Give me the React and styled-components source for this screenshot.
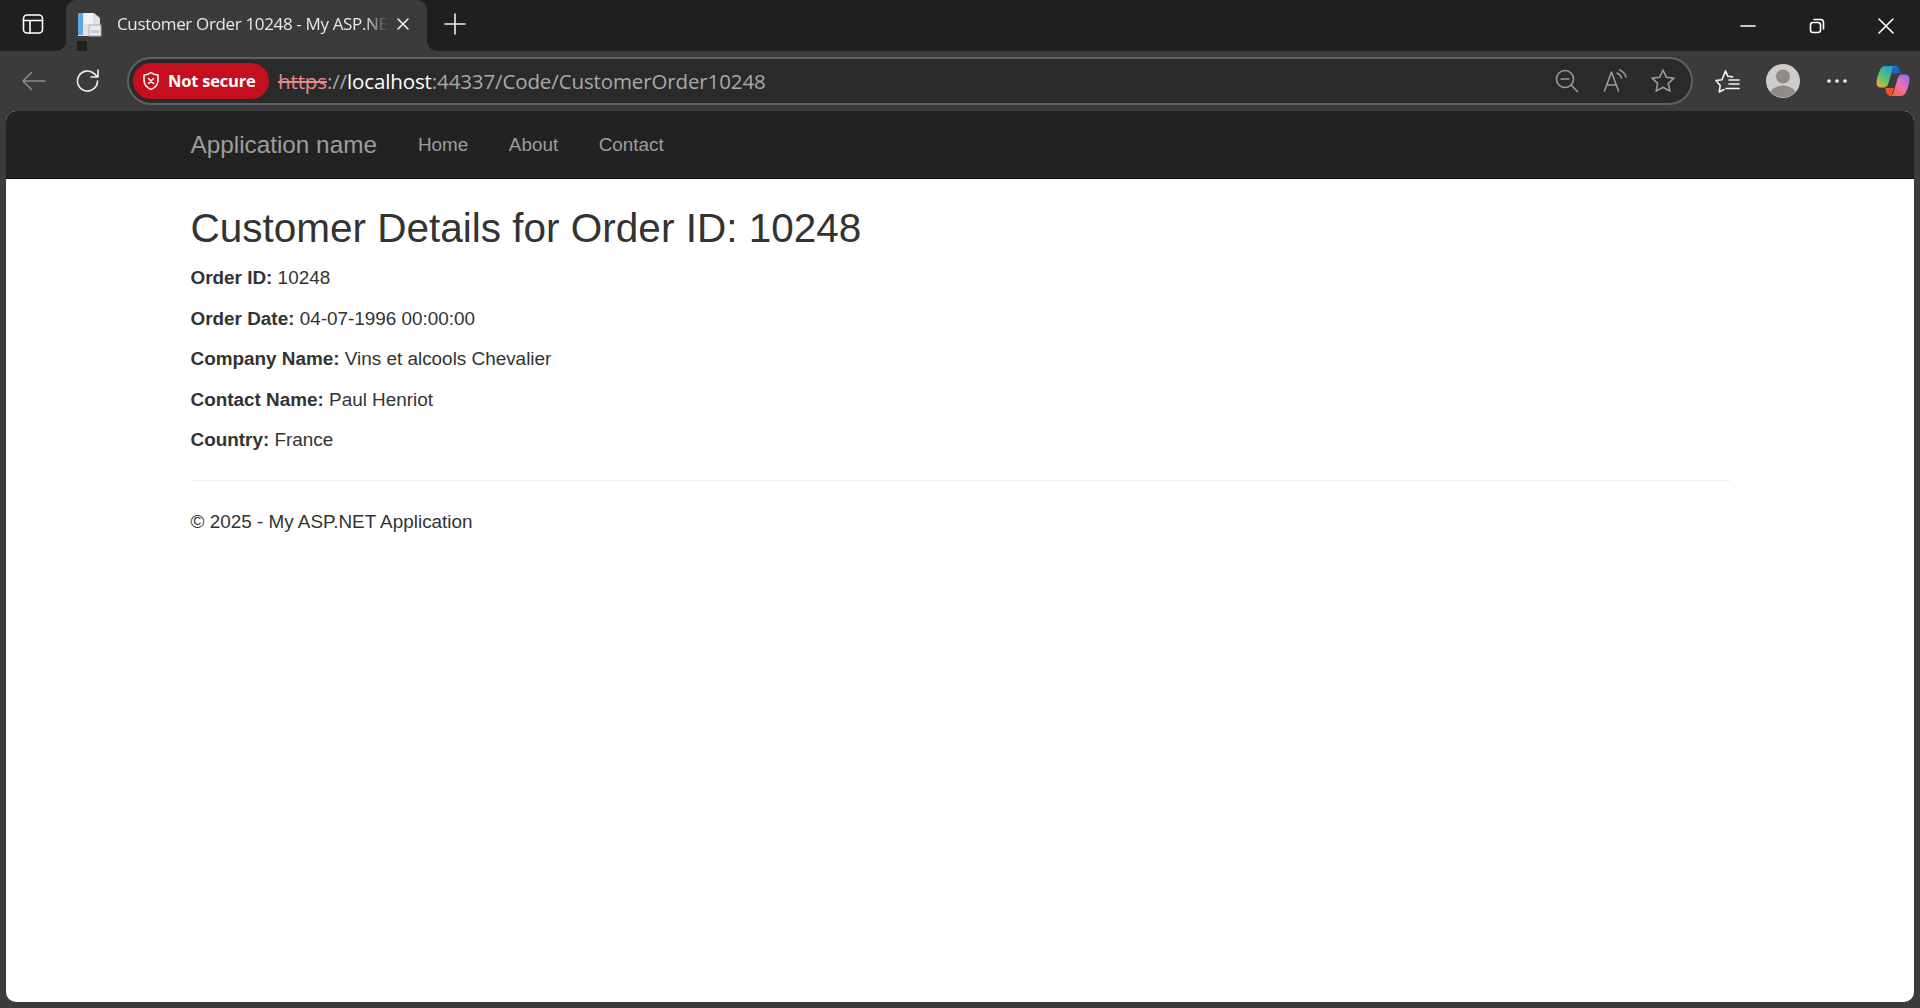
import React from 'react';
import styled, { createGlobalStyle } from 'styled-components';

const Global = createGlobalStyle`
  html, body { margin: 0; padding: 0; background: #3b3b3b; }
  * { box-sizing: border-box; }
`;
const CHROME = `"Open Sans", "Noto Sans", sans-serif`;
const WEB = `"Liberation Sans", Arial, sans-serif`;

const Frame = styled.div`
  width: 1920px; height: 1008px; display: flex; flex-direction: column;
  background: #3b3b3b; overflow: hidden;
`;
const TitleBar = styled.div`
  height: 51px; flex: none; background: #1f1f1f; display: flex; align-items: stretch; position: relative;
`;
const SidebarButton = styled.div`
  width: 66px; display: flex; align-items: center; justify-content: center; padding-bottom: 3px;
`;
const Tab = styled.div`
  width: 361px; background: #3b3b3b; border-radius: 10px 10px 0 0; display: flex; align-items: center;
  padding: 0 17px 3px 11px; position: relative;
  &::before, &::after { content: ''; position: absolute; bottom: 0; width: 10px; height: 10px; background: #1f1f1f; }
`;
const Corner = styled.div`
  position: absolute; bottom: 0; width: 10px; height: 10px; background: #3b3b3b;
  ${p => p.$side}: -10px;
  &::after { content: ''; position: absolute; inset: 0; background: #1f1f1f;
    border-radius: ${p => p.$side === 'left' ? '0 0 10px 0' : '0 0 0 10px'}; }
`;
const TabTitle = styled.div`
  margin-left: 14px; width: 270px; font: 400 17px/24px ${CHROME}; color: #e8e8e8; white-space: nowrap; overflow: hidden;
  -webkit-mask-image: linear-gradient(to right, #000 92%, transparent 100%);
  mask-image: linear-gradient(to right, #000 92%, transparent 100%);
  letter-spacing: -0.35px;
`;
const NewTab = styled.div`
  width: 50px; margin-left: 3px; display: flex; align-items: center; justify-content: center; padding-bottom: 3px;
`;
const Spacer = styled.div`flex: 1;`;
const WinButton = styled.div`
  width: 69px; display: flex; align-items: center; justify-content: center;
`;
const Toolbar = styled.div`
  height: 60px; flex: none; background: #3b3b3b; display: flex; align-items: center; padding-left: 14px; padding-bottom: 0;
`;
const NavIcon = styled.div`
  width: ${p => p.$w || 40}px; height: 40px; display: flex; align-items: center; justify-content: center; flex: none;
`;
const AddressBar = styled.div`
  margin-left: 19px; width: 1566px; height: 48px; flex: none; border: 2px solid #616161; border-radius: 24px;
  background: #2a2a2a; display: flex; align-items: center; padding: 0 8px 0 4px;
`;
const NotSecure = styled.div`
  height: 36px; width: 136px; flex: none; background: #c50f1f; border-radius: 18px; display: flex; align-items: center; padding-left: 9px;
  font: 700 16.5px/20px ${CHROME}; color: #fff; white-space: nowrap; gap: 8px; letter-spacing: -0.2px;
`;
const Url = styled.div`
  margin-left: 9px; font: 400 20.5px/28px ${CHROME}; color: #a9a9a9; white-space: nowrap; display: flex; letter-spacing: -0.12px;
`;
const Https = styled.span`color: #e88a8a; text-decoration: line-through;`;
const Host = styled.span`color: #fff;`;
const Page = styled.div`
  margin: 0 6px; flex: 1; background: #fff; border-radius: 10px; overflow: hidden; margin-bottom: 6px; font: 400 18.9px/27px ${WEB}; color: #333;
`;
const Navbar = styled.div`
  height: 68px; background: #222; border-bottom: 1px solid #080808;
`;
const Container = styled.div`
  width: 1579.5px; margin: 0 auto; padding: 0 20.25px;
`;
const NavInner = styled(Container)`display: flex; align-items: center; height: 67px;`;
const Brand = styled.div`
  font-size: 24.3px; line-height: 27px; color: #9d9d9d; margin-right: 41px;
`;
const NavLink = styled.div`
  font-size: 18.9px; line-height: 27px; color: #9d9d9d; margin-right: 40.5px;
`;
const Heading = styled.h2`
  font: 500 40.5px/44.55px ${WEB}; color: #333; margin: 27px 0 13.5px;
`;
const Detail = styled.p`margin: 0 0 13.5px; color: #333;`;
const Rule = styled.hr`
  border: 0; border-top: 1px solid #eee; margin: 27px 0;
`;
const Footer = styled.p`margin: 0;`;

const Line = ({ w = 24, h = 24, children, box }) => (
  <svg width={w} height={h} viewBox={box || `0 0 ${w} ${h}`} fill="none" stroke="currentColor" strokeWidth="1.6" strokeLinecap="round" strokeLinejoin="round">{children}</svg>
);

const SidebarIcon = () => (
  <span style={{ color: '#fff', display: 'flex' }}><Line w={22} h={22}><rect x="1.5" y="2" width="19" height="18" rx="3.5" /><path d="M1.5 7.5h19M8 7.5V20" /></Line></span>
);
const PageIcon = () => (
  <svg width="26" height="26" viewBox="0 0 26 26">
    <path d="M1 2h16l6 5v18H1z" fill="#dfe3e8" />
    <rect x="1" y="2" width="5" height="22" fill="#5fa7dc" />
    <rect x="7" y="2" width="9" height="11" fill="#f2f3f5" />
    <rect x="12" y="14" width="12" height="11" fill="#e8eaec" stroke="#a8adb3" strokeWidth="1" />
    <rect x="14" y="19" width="8" height="3" fill="#c8ccd0" />
  </svg>
);
const Shield = () => (
  <svg width="18" height="20" viewBox="0 0 18 20" fill="none" stroke="#fff" strokeWidth="1.5" strokeLinecap="round" strokeLinejoin="round">
    <path d="M9 1.5c2 1.6 4.4 2.5 7 2.6v5c0 4.5-2.6 7.6-7 9.4-4.4-1.8-7-4.9-7-9.4v-5c2.6-.1 5-1 7-2.6z" />
    <path d="M6.5 7.5l5 5M11.5 7.5l-5 5" />
  </svg>
);
const CopilotIcon = () => (
  <svg width="34" height="32" viewBox="0 0 34 32">
    <defs>
      <linearGradient id="cpA" x1="0" y1="1" x2="0.7" y2="0">
        <stop offset="0" stopColor="#f7b52c" /><stop offset="0.45" stopColor="#5fc36b" /><stop offset="1" stopColor="#1f9be0" />
      </linearGradient>
      <linearGradient id="cpB" x1="0.2" y1="1" x2="0.8" y2="0">
        <stop offset="0" stopColor="#f6653f" /><stop offset="0.5" stopColor="#ef6fb0" /><stop offset="1" stopColor="#9a6cf0" />
      </linearGradient>
      <linearGradient id="cpC" x1="0" y1="0" x2="1" y2="0">
        <stop offset="0" stopColor="#1a6fd0" /><stop offset="1" stopColor="#2a50c8" />
      </linearGradient>
    </defs>
    <path d="M19 .5c2.800 0 4 1.600 4.800 4l1 4H16z" fill="url(#cpC)" />
    <path d="M9 1h12c-2.500 0-4 1.500-4.800 4.500L12.500 18c-.8 2.800-2 4.500-4.500 4.500H5c-3 0-4.700-2.200-4.500-5.500.2-3.500 2-9 3.700-12.500C5.300 2.200 7 1 9 1z" fill="url(#cpA)" />
    <path d="M25 31H13c2.500 0 4-1.500 4.800-4.500L21.500 14c.8-2.800 2-4.500 4.500-4.500h3c3 0 4.700 2.200 4.500 5.500-.2 3.500-2 9-3.700 12.500C28.700 29.800 27 31 25 31z" fill="url(#cpB)" />
    <path d="M15 31c-2.800 0-4-1.600-4.800-4l-1-4H18l-1.500 5c-.4 1.500-.8 3-1.500 3z" fill="#f0502f" />
  </svg>
);

export default function App() {
  return (
    <Frame>
      <Global />
      <TitleBar>
        <SidebarButton><SidebarIcon /></SidebarButton>
        <Tab>
          <Corner $side="left" /><Corner $side="right" />
          <PageIcon />
          <TabTitle>Customer Order 10248 - My ASP.NET Application</TabTitle>
          <span style={{ color: '#f0f0f0', display: 'flex', marginLeft: 'auto' }}><Line w={14} h={14}><path d="M2 2l10 10M12 2L2 12" /></Line></span>
        </Tab>
        <NewTab><span style={{ color: '#f0f0f0', display: 'flex' }}><Line w={22} h={22}><path d="M11 1v20M1 11h20" /></Line></span></NewTab>
        <Spacer />
        <WinButton><span style={{ color: '#fff', display: 'flex' }}><Line w={16} h={16}><path d="M1 8h14" /></Line></span></WinButton>
        <WinButton><span style={{ color: '#fff', display: 'flex' }}><Line w={16} h={16}><rect x="1.5" y="4.500" width="10" height="10" rx="2.500" /><path d="M5 1.500h6.500a3 3 0 0 1 3 3V11" /></Line></span></WinButton>
        <WinButton><span style={{ color: '#fff', display: 'flex' }}><Line w={16} h={16}><path d="M1 1l14 14M15 1L1 15" /></Line></span></WinButton>
      </TitleBar>
      <Toolbar>
        <NavIcon><span style={{ color: '#8a8a8a', display: 'flex' }}><Line w={26} h={20}><path d="M2 10h22M10.500 1.500L2 10l8.500 8.500" /></Line></span></NavIcon>
        <NavIcon style={{ marginLeft: 14 }}><span style={{ color: '#f0f0f0', display: 'flex' }}><Line w={26} h={26}><path d="M22.500 13a10 10 0 1 1-3-7.100l3 3M23 2v7h-7" /></Line></span></NavIcon>
        <AddressBar>
          <NotSecure><Shield />Not secure</NotSecure>
          <Url><Https>https</Https><span>:</span><span>//</span><Host>localhost</Host><span>:44337/Code/CustomerOrder10248</span></Url>
          <Spacer />
          <NavIcon><span style={{ color: '#9a9a9a', display: 'flex' }}><Line w={24} h={24}><circle cx="10" cy="10" r="8.500" /><path d="M6 10h8M16 16l6.500 6.500" /></Line></span></NavIcon>
          <NavIcon style={{ marginLeft: 8 }}><span style={{ color: '#9a9a9a', display: 'flex' }}><Line w={24} h={24}><path d="M1.500 22L8.500 3l7 19M4 16h9.500M14 4c2.300 1 3.800 2.600 4.500 5M16.500 1c3.500 1.300 5.500 3.500 6.500 7" /></Line></span></NavIcon>
          <NavIcon style={{ marginLeft: 8 }}><span style={{ color: '#9a9a9a', display: 'flex' }}><Line w={26} h={26}><path d="M13 2l3.300 7.200 7.700.9-5.700 5.300 1.600 7.700-6.900-3.900-6.900 3.900 1.600-7.700L2 10.100l7.700-.9z" /></Line></span></NavIcon>
        </AddressBar>
        <NavIcon style={{ marginLeft: 15 }}><span style={{ color: '#f4f4f4', display: 'flex' }}><Line w={26} h={24}><path d="M10.500 2l2.400 5.300 4.600.6M9 20.500l-4.800 2.500 1-6.500L1 11.500l6-.8L10.500 2M14 11h10M14 15h10M11 19.500h13" /></Line></span></NavIcon>
        <NavIcon style={{ marginLeft: 15 }}>
          <svg width="34" height="34" viewBox="0 0 34 34">
            <circle cx="17" cy="17" r="17" fill="#cfcdc9" />
            <clipPath id="avatarClip"><circle cx="17" cy="17" r="16.500" /></clipPath>
            <circle cx="17" cy="12.500" r="7" fill="#8f8c88" />
            <ellipse cx="17" cy="31" rx="13" ry="9.500" fill="#8f8c88" clipPath="url(#avatarClip)" />
          </svg>
        </NavIcon>
        <NavIcon style={{ marginLeft: 14 }}>
          <svg width="22" height="6" viewBox="0 0 22 6" fill="#f4f4f4"><circle cx="3" cy="3" r="1.800" /><circle cx="11" cy="3" r="1.800" /><circle cx="19" cy="3" r="1.800" /></svg>
        </NavIcon>
        <NavIcon style={{ marginLeft: 16 }}><CopilotIcon /></NavIcon>
      </Toolbar>
      <Page>
        <Navbar>
          <NavInner>
            <Brand>Application name</Brand>
            <NavLink>Home</NavLink>
            <NavLink>About</NavLink>
            <NavLink>Contact</NavLink>
          </NavInner>
        </Navbar>
        <Container>
          <Heading>Customer Details for Order ID: 10248</Heading>
          <Detail><strong>Order ID:</strong> 10248</Detail>
          <Detail><strong>Order Date:</strong> 04-07-1996 00:00:00</Detail>
          <Detail><strong>Company Name:</strong> Vins et alcools Chevalier</Detail>
          <Detail><strong>Contact Name:</strong> Paul Henriot</Detail>
          <Detail><strong>Country:</strong> France</Detail>
          <Rule />
          <Footer>© 2025 - My ASP.NET Application</Footer>
        </Container>
      </Page>
    </Frame>
  );
}
